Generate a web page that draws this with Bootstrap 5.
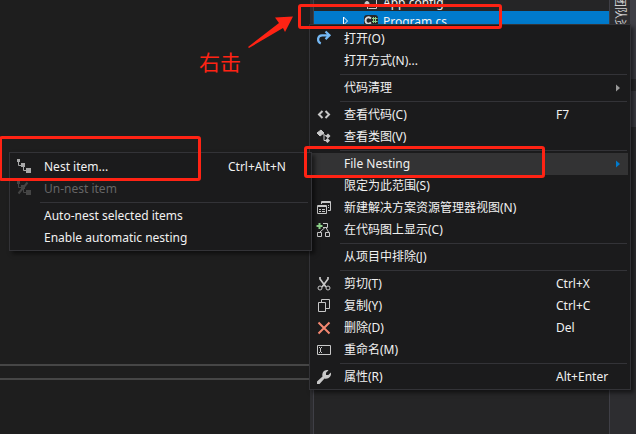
<!DOCTYPE html>
<html lang="zh-CN">
<head>
<meta charset="utf-8">
<meta name="viewport" content="width=device-width, initial-scale=1">
<title>File Nesting</title>
<link href="https://cdn.jsdelivr.net/npm/bootstrap@5.3.0/dist/css/bootstrap.min.css" rel="stylesheet">
<style>
  body { background: #1e1e1e; color: #f1f1f1; font: 12px/22px "Noto Sans", "Noto Sans CJK SC", sans-serif; }
  .workspace { height: 100vh; }
  .split-bar { height: 16px; margin-top: 364px; border: solid #464646; border-width: 2px 0; }
  .solution { flex: 0 0 300px; background: #252526; border-left: 3px solid #2d2d30; border-right: 1px solid #3f3f46; }
  .tree { border-left: 1px solid #3f3f46; }
  .tree-row { height: 22px; line-height: 22px; padding-left: 26px; }
  .tree-row.clipped { margin-top: -5px; height: 16px; line-height: 16px; }
  .tree-row.selected { background: #007acc; }
  .tree-row svg { width: 14px; height: 14px; }
  .tree-twist { width: 24px; }
  .tree-name { margin-left: 5px; }
  .side-strip { flex: 0 0 26px; background: #2d2d30; }
  .side-tab { writing-mode: vertical-rl; text-orientation: sideways; color: #d0d0d0; line-height: 18px;
    border: 0 solid #3f3f46; border-right-width: 6px; background: none; padding: 0; width: 26px; height: 84px; margin-top: -5px; text-align: left; }
  .side-tab.second { height: 36px; margin-top: 12px; }
  .vs-menu { background: #1b1b1c; border: 1px solid #333337; padding: 3px 2px 1px 0; box-shadow: 3px 3px 4px rgba(0,0,0,.5); }
  .main-menu { left: 309px; top: 24px; width: 322px; }
  .sub-menu { left: 9px; top: 152px; width: 303px; }
  .vs-item { display: flex; align-items: center; width: 100%; height: 22px; padding: 0 0 0 6px; border: 0; background: none; color: inherit; text-align: left; white-space: nowrap; }
  .vs-item.active-item { background: #333334; }
  .vs-item:disabled { color: #656565; }
  .vs-icon { flex: 0 0 28px; height: 16px; display: flex; }
  .vs-icon svg { width: 16px; height: 16px; overflow: visible; }
  .vs-key { flex: 0 0 72px; }
  .sub-menu .vs-key { flex-basis: 81px; }
  .vs-arrow { flex: 0 0 12px; display: flex; }
  .vs-rule { height: 1px; margin: 2px 1px 2px 30px; background: #333337; }
  .callout { border: 3px solid #ff2314; border-radius: 3px; pointer-events: none; }
  .callout-file { left: 298px; top: 4px; width: 204px; height: 25px; }
  .callout-nest { left: -1px; top: 136px; width: 202px; height: 45px; }
  .callout-menu { left: 304px; top: 146px; width: 241px; height: 32px; }
  .callout-arrow { left: 244px; top: 12px; }
  .callout-text { left: 199px; top: 49px; color: #ff2314; font-size: 21px; line-height: 26px; }
</style>
<script src="https://cdn.jsdelivr.net/npm/bootstrap@5.3.0/dist/js/bootstrap.bundle.min.js"></script>
</head>
<body class="overflow-hidden">
<main class="workspace d-flex position-relative overflow-hidden">
  <section class="flex-grow-1"><div class="split-bar"></div></section>
  <aside class="solution d-flex flex-column overflow-hidden">
    <div class="tree flex-grow-1">
      <div class="tree-row clipped d-flex align-items-center">
        <span class="tree-twist"></span>
        <svg viewBox="0 0 14 14" fill="none" stroke="#c8c8c8"><path d="M4.500 1.500h8v11h-8M3.500 8v5" /><circle cx="3" cy="7.500" r="2" fill="#c8c8c8"/></svg>
        <span class="tree-name">App.config</span>
      </div>
      <div class="tree-row selected d-flex align-items-center">
        <span class="tree-twist d-flex"><svg viewBox="0 0 14 14" fill="none" stroke="#fff"><path d="M3.500 2v8L7.500 6z"/></svg></span>
        <svg viewBox="0 0 14 14" fill="none"><rect width="14" height="11" rx="3" fill="#252526"/><path d="M7 3.500C4 1 1.500 3 1.500 5.500S4 10 7 7.500" stroke="#d8d8d8" stroke-width="2"/><path d="M9.500 2v6M11.500 2v6M8 3.500h5.500M8 6.500h5.500" stroke="#8dd28a"/></svg>
        <span class="tree-name">Program.cs</span>
      </div>
    </div>
  </aside>
  <aside class="side-strip d-flex flex-column">
    <button class="side-tab" type="button">团队资源</button>
    <button class="side-tab second" type="button" aria-label="属性"></button>
  </aside>

  <div class="vs-menu main-menu position-absolute" role="menu">
    <button class="vs-item" type="button"><span class="vs-icon"><svg viewBox="0 0 16 16" fill="none" stroke="#75b9f5" stroke-width="2.200"><path d="M4.800 12.500C1 11 1 4.500 6 4.300H13M9.500.500l4 3.800-4 3.800"/></svg></span><span class="flex-grow-1">打开(O)</span></button>
    <button class="vs-item" type="button"><span class="vs-icon"></span><span class="flex-grow-1">打开方式(N)...</span></button>
    <div class="vs-rule"></div>
    <button class="vs-item" type="button"><span class="vs-icon"></span><span class="flex-grow-1">代码清理</span><span class="vs-arrow"><svg width="4" height="8" viewBox="0 0 4 8"><path d="M0 0.500L4 4L0 7.500z" fill="#999"/></svg></span></button>
    <div class="vs-rule"></div>
    <button class="vs-item" type="button"><span class="vs-icon"><svg viewBox="0 0 16 16" fill="none" stroke="#c8c8c8" stroke-width="2"><path d="M6.500 4L3 7.500L6.500 11M9.500 4L13 7.500L9.500 11"/></svg></span><span class="flex-grow-1">查看代码(C)</span><span class="vs-key">F7</span></button>
    <button class="vs-item" type="button"><span class="vs-icon"><svg viewBox="0 0 16 16"><path d="M1 4L5 1L8 4L4 7z" fill="#c8c8c8" stroke="#c8c8c8"/><path d="M6 4l4 3h3M8 6v5.500h3" fill="none" stroke="#c8c8c8"/><path d="M12 4.500l2.500 2.500L12 9.500L9.500 7zM11.500 9l2.500 2.500-2.500 2.500L9 11.500z" fill="#c8c8c8"/></svg></span><span class="flex-grow-1">查看类图(V)</span></button>
    <div class="vs-rule"></div>
    <button class="vs-item active-item" type="button"><span class="vs-icon"></span><span class="flex-grow-1">File Nesting</span><span class="vs-arrow"><svg width="4" height="8" viewBox="0 0 4 8"><path d="M0 0.500L4 4L0 7.500z" fill="#007acc"/></svg></span></button>
    <button class="vs-item" type="button"><span class="vs-icon"></span><span class="flex-grow-1">限定为此范围(S)</span></button>
    <button class="vs-item" type="button"><span class="vs-icon"><svg viewBox="0 0 16 16" fill="none" stroke="#c8c8c8"><path d="M5.500 4V1.500h9v9h-2.500M5.500 2.500h9M1.500 5.500h9v8h-9zM1.500 6.500h9M3 9.500h2M6 9.500h3M3 11.500h2M6 11.500h3M12 5.500h1M12 7.500h1"/></svg></span><span class="flex-grow-1">新建解决方案资源管理器视图(N)</span></button>
    <button class="vs-item" type="button"><span class="vs-icon"><svg viewBox="0 0 16 16" fill="none" stroke="#c8c8c8"><path d="M7 1.500h4.500v4H7M9 5.500L4 10M10 5.500L12.500 10M1.500 10.500h4v4h-4zM9.500 10.500h4v4h-4z"/><path d="M3.500 1v6M.500 4h6" stroke="#8dd28a" stroke-width="2"/></svg></span><span class="flex-grow-1">在代码图上显示(C)</span></button>
    <div class="vs-rule"></div>
    <button class="vs-item" type="button"><span class="vs-icon"></span><span class="flex-grow-1">从项目中排除(J)</span></button>
    <div class="vs-rule"></div>
    <button class="vs-item" type="button"><span class="vs-icon"><svg viewBox="0 0 16 16" fill="none" stroke="#c8c8c8"><path d="M4 1v2l6 8M12 1v2l-6 8" stroke-width="1.700"/><circle cx="4" cy="12" r="2"/><circle cx="12" cy="12" r="2"/></svg></span><span class="flex-grow-1">剪切(T)</span><span class="vs-key">Ctrl+X</span></button>
    <button class="vs-item" type="button"><span class="vs-icon"><svg viewBox="0 0 16 16" fill="none" stroke="#c8c8c8"><path d="M5.500 4.500v-3h8v9h-4M2.500 4.500h7v9h-7z"/></svg></span><span class="flex-grow-1">复制(Y)</span><span class="vs-key">Ctrl+C</span></button>
    <button class="vs-item" type="button"><span class="vs-icon"><svg viewBox="0 0 16 16" stroke="#f48771" stroke-width="2"><path d="M2.500 2.500l11 11M13.500 2.500l-11 11"/></svg></span><span class="flex-grow-1">删除(D)</span><span class="vs-key">Del</span></button>
    <button class="vs-item" type="button"><span class="vs-icon"><svg viewBox="0 0 16 16" fill="none" stroke="#c8c8c8"><path d="M1.500 3.500h13v9h-13zM3 5.500h1M5 5.500h1M4.500 6v4M3 10.500h1M5 10.500h1"/></svg></span><span class="flex-grow-1">重命名(M)</span></button>
    <div class="vs-rule"></div>
    <button class="vs-item" type="button"><span class="vs-icon"><svg viewBox="0 0 16 16" fill="#c8c8c8"><path d="M1 12.500L6.500 7.500C5.500 3 9 0 12.500 1.200L10 3.700V6h2.300L14.800 3.500C16 7 12.500 10.500 8.500 9.500L3.500 15H1z"/></svg></span><span class="flex-grow-1">属性(R)</span><span class="vs-key">Alt+Enter</span></button>
  </div>

  <div class="vs-menu sub-menu position-absolute" role="menu">
    <button class="vs-item" type="button"><span class="vs-icon"><svg viewBox="0 0 16 16" fill="#a8a8a8"><path d="M1 0h3v3H1zM5 4h4v4H5zM10 9h5v5h-5z"/><path d="M2.500 3v3.500H5M7.500 8v3.500H10" fill="none" stroke="#a8a8a8"/></svg></span><span class="flex-grow-1">Nest item...</span><span class="vs-key">Ctrl+Alt+N</span></button>
    <button class="vs-item" type="button" disabled><span class="vs-icon"><svg viewBox="0 0 16 16" fill="#454545"><path d="M1 0h3v3H1zM5 4h4v4H5zM10 9h5v5h-5z"/><path d="M2.500 3v3.500H5M7.500 8v3.500H10" fill="none" stroke="#454545"/><path d="M11.500 1.500L2.500 12.500" stroke="#454545" stroke-width="2"/></svg></span><span class="flex-grow-1">Un-nest item</span></button>
    <div class="vs-rule"></div>
    <button class="vs-item" type="button"><span class="vs-icon"></span><span class="flex-grow-1">Auto-nest selected items</span></button>
    <button class="vs-item" type="button"><span class="vs-icon"></span><span class="flex-grow-1">Enable automatic nesting</span></button>
  </div>

  <div class="callout callout-file position-absolute"></div>
  <div class="callout callout-nest position-absolute"></div>
  <div class="callout callout-menu position-absolute"></div>
  <svg class="callout-arrow position-absolute" width="52" height="40" viewBox="0 0 52 40"><path d="M4 35L35 11L31 5.500L49 4.500L41 20L39 16L5 36z" fill="#ff2314"/></svg>
  <div class="callout-text position-absolute">右击</div>
</main>
</body>
</html>
